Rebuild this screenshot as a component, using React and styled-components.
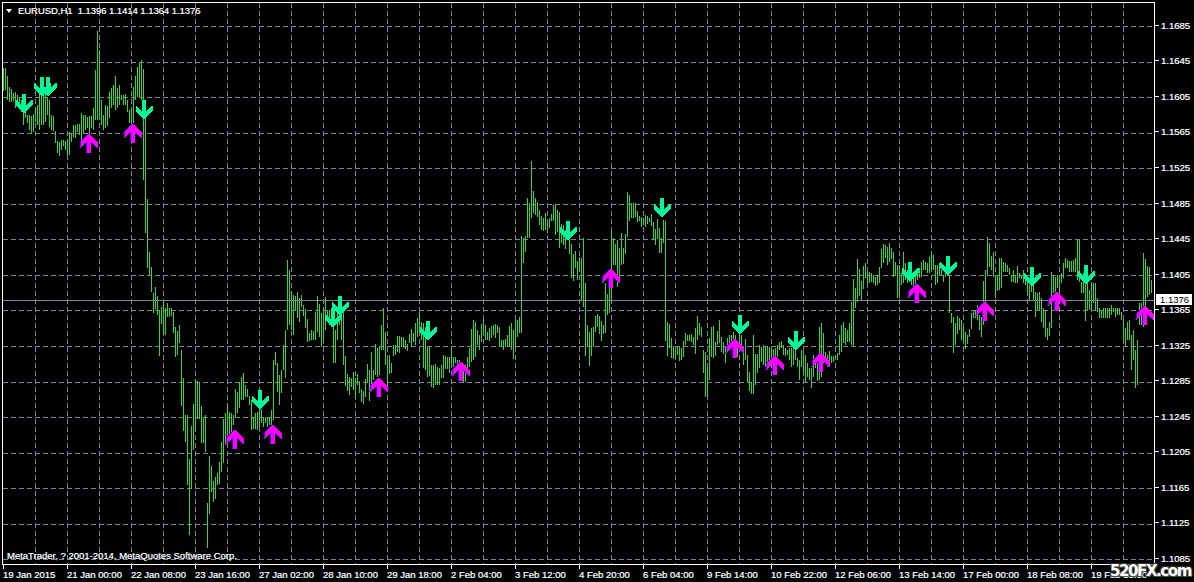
import React from 'react';
import styled, { createGlobalStyle } from 'styled-components';

const GRID = '#778899';
const BULL = '#32d732';
const ROW = 35.55;

const prices = [
  '1.1685', '1.1645', '1.1605', '1.1565', '1.1525', '1.1485', '1.1445', '1.1405',
  '1.1365', '1.1325', '1.1285', '1.1245', '1.1205', '1.1165', '1.1125', '1.1085',
];

const times = [
  '19 Jan 2015', '21 Jan 00:00', '22 Jan 08:00', '23 Jan 16:00', '27 Jan 02:00', '28 Jan 10:00',
  '29 Jan 18:00', '2 Feb 04:00', '3 Feb 12:00', '4 Feb 20:00', '6 Feb 04:00', '9 Feb 14:00',
  '10 Feb 22:00', '12 Feb 06:00', '13 Feb 14:00', '17 Feb 00:00', '18 Feb 08:00', '19 Feb 16:00',
];

// bars are hi/lo pairs, one every 2px starting at `from`; y = top + value / scale
const segments = [
  { from: 3, top: 0, scale: 1, data: [
    68,91, 68,90, 76,100, 87,102, 89,102, 93,101, 92,108, 95,105, 97,106, 100,112, 105,125, 112,118,
    115,123, 115,130, 116,133, 114,132, 108,122, 105,125, 90,130, 85,125, 95,125, 90,122, 97,115,
    100,127, 115,130, 116,131, 131,143, 141,153, 142,156, 140,150, 140,146, 141,150, 140,155, 132,155,
    133,142, 125,137, 125,138, 124,132, 124,135, 113,140, 115,134, 115,130, 117,128, 116,135, 116,128,
    108,130, 70,120, 31,120, 50,120, 100,125, 115,130, 105,128, 106,126, 92,118, 88,108, 85,105, 76,110,
    88,108, 85,105, 95,100, 95,105, 94,105,
    100,112, 110,123, 108,123, 87,123, 76,100, 67,97, 63,97, 60,100, 69,180, 100,233, 199,268, 252,275,
    267,292, 293,313, 287,309, 296,315, 310,356, 307,324, 302,334, 308,335, 303,317, 308,317, 308,316,
    312,333, 327,357, 331,355, 325,343,
    350,406, 378,431, 415,442, 415,485, 459,535, 426,489, 404,450, 379,431, 381,419, 383,419, 406,443,
    417,443, 415,452, 503,548, 456,514, 466,492, 481,502, 477,499, 473,485, 462,484, 442,472, 419,463,
    413,445, 404,440, 412,437, 413,437, 415,425, 389,417, 392,413, 382,408, 377,400, 373,400, 385,397,
    389,397, 396,405, 400,430, 417,429, 413,429, 412,430, 409,427, 409,423, 417,427, 417,423, 417,427,
    417,425, 410,425, 360,420, 352,365, 363,392, 375,405, 370,393, 345,370, 330,378, 260,330, 270,325,
    292,330, 295,335, 296,310, 292,318, 298,322,
  ] },
  { from: 301, top: 250, scale: 3, data: [
    135,172, 165,198, 178,233, 207,275, 250,272, 240,270, 243,270, 185,270, 138,245, 162,260, 190,290,
    175,272, 140,240, 180,210, 180,225, 180,230, 210,340, 240,340, 190,270, 180,225, 180,270, 185,345,
    318,408, 372,422, 380,435, 385,410, 365,420, 385,445, 372,405, 392,430, 418,455, 422,462, 388,440,
    342,400, 360,452, 305,410, 360,390, 282,375, 295,380, 292,375, 225,300, 175,300, 245,345, 330,420,
    315,372, 340,370, 285,318, 285,315, 258,305, 258,310, 262,290, 262,295, 270,298, 282,302, 252,280,
    237,290, 248,275, 218,285, 205,262, 185,245, 215,270, 220,355, 230,360, 290,380, 290,378, 345,410,
    345,415, 342,405, 350,405, 355,405, 345,385, 315,385, 318,358, 320,358, 322,370, 290,340, 320,350,
    320,340, 330,350, 330,380, 350,375, 345,395, 345,395, 320,375, 295,350, 237,335, 210,330, 215,320,
    240,285, 255,300,
  ] },
  { from: 481, top: 150, scale: 3, data: [
    522,575, 510,555, 525,570, 545,570, 535,572, 528,565, 525,555, 522,565, 525,548, 530,590, 570,590,
    570,600, 568,590, 555,590, 528,590, 518,600, 540,627, 510,590, 510,560, 502,550, 258,550, 265,340,
    258,305, 145,265, 160,265, 33,205, 123,190, 145,195, 155,200, 180,225, 198,240, 205,243, 190,240,
    212,248, 205,235, 192,212, 165,212, 163,255, 180,245, 187,293, 222,280, 225,285, 240,297, 245,270,
    265,312, 282,385, 312,392, 303,355, 332,390, 322,365, 325,450, 265,470, 400,618, 525,590, 545,648,
    535,618, 532,590, 497,545, 492,530, 497,553, 512,572, 525,553, 400,550, 432,495, 408,488, 240,460,
    265,345, 282,345, 270,412, 295,385, 250,345, 295,342, 252,312, 127,260, 135,212, 158,205, 160,205,
    160,200, 183,215, 198,212, 200,230, 203,225, 195,230, 198,222, 205,215, 192,228, 215,268, 237,285,
    208,268, 235,308, 265,308, 210,280, 213,522,
  ] },
  { from: 665, top: 280, scale: 3, data: [
    15,182, 125,228, 132,205, 175,235, 198,237, 210,230, 200,225, 202,243, 205,240, 183,230, 160,195,
    165,182, 165,183, 162,185, 170,195, 145,222, 108,180, 130,165, 140,170, 210,278, 215,350, 265,350,
    175,300, 142,230, 138,233, 185,228, 153,195, 120,190, 170,215, 185,222, 200,248, 175,215, 165,210,
    165,190, 155,180, 165,190, 185,232, 160,185, 165,210, 200,255, 178,240, 225,307, 277,332, 305,342,
    165,342, 223,315, 222,280, 195,265, 200,245, 195,255, 200,262, 198,250, 200,245, 205,265, 208,240,
    205,240, 195,230, 185,210, 182,205, 195,225, 205,228, 210,225, 205,240, 205,262, 205,255, 210,240,
    235,262, 240,300, 210,260, 212,280, 225,305, 248,290, 265,300, 265,323, 225,290, 240,265, 250,303,
    140,300, 128,290, 160,250, 215,250, 225,262, 213,250, 228,250, 228,245, 225,240, 218,240, 165,225,
    135,215, 125,188, 145,195, 150,185, 130,185,
  ] },
  { from: 851, top: 220, scale: 3, data: [
    245,375, 178,378, 205,265, 118,245, 148,228, 183,242, 138,208, 130,175, 155,195, 155,190, 158,185,
    165,190, 170,198, 165,195, 142,190, 88,145, 72,130, 75,115, 82,135, 68,125, 85,118, 95,170, 125,165,
    135,235, 135,235, 160,195, 97,190, 130,180, 150,190, 140,185, 155,195, 160,205, 165,215, 145,180,
    145,175, 125,170, 120,150, 125,150, 130,160, 110,160, 100,150, 105,150, 135,195, 135,190, 130,165,
    150,165, 165,185, 150,170, 130,165, 165,280, 280,310, 290,398, 308,375, 288,342, 295,330, 300,360,
    320,365, 335,388, 345,372, 328,350, 280,328, 272,295, 270,295, 255,300, 285,330, 290,350, 182,315,
    150,300, 52,165, 70,140, 108,150, 97,170, 165,235, 165,212, 115,210, 115,205, 125,155, 128,155,
    135,155, 145,165, 165,185, 150,185, 165,188, 138,190, 160,175, 165,178, 150,190, 170,195, 185,220,
    195,240, 190,215, 195,240, 215,290, 218,270, 215,270, 235,305, 265,325, 270,350, 325,360, 305,348,
    155,325, 165,220, 170,225, 165,205, 165,215,
  ] },
  { from: 1061, top: 240, scale: 3, data: [
    100,128, 70,115, 55,85, 60,85, 62,95, 62,95, 60,95, 55,95, 0,120, 0,125, 125,160, 100,160, 100,243,
    130,210, 150,210, 125,210, 130,190, 130,210, 175,215, 205,235, 212,235, 205,235, 205,235, 205,235,
    205,235, 195,225, 205,215, 205,230, 205,225, 205,225, 215,240, 240,300, 265,320, 245,300, 240,300,
    285,390, 270,360, 330,444, 300,435, 188,255, 190,255, 40,262, 58,210, 78,170, 80,165, 120,160,
  ] },
];

const bars = segments.flatMap(({ from, top, scale, data }) => {
  const out = [];
  for (let i = 0; i < data.length; i += 2) {
    out.push({ x: from + i, hi: top + data[i] / scale, lo: top + data[i + 1] / scale });
  }
  return out;
});

const barPath = bars
  .map((b) => `M${b.x + 0.5} ${Math.round(b.hi)}V${Math.round(b.lo)}`)
  .join('');

// centre x, top y of the 19px arrow
const downArrows = [
  [24, 94], [42, 77], [48, 77], [144, 100], [260, 390], [333, 308], [340, 296], [428, 321],
  [568, 221], [662, 198], [740, 315], [796, 331], [910, 262], [948, 256], [1032, 267], [1086, 265],
];
const upArrows = [
  [89, 134], [133, 124], [235, 430], [273, 425], [379, 378], [461, 362], [611, 269], [735, 339],
  [775, 356], [821, 353], [917, 284], [985, 302], [1057, 292], [1145, 306],
];

const arrowDown = '-2,0 2,0 2,11 8.5,5.5 8.5,11 0,19 -8.5,11 -8.5,5.5 -2,11';
const arrowUp = '-2,19 2,19 2,8 8.5,13.5 8.5,8 0,0 -8.5,8 -8.5,13.5 -2,8';

const GlobalStyle = createGlobalStyle`
  html, body {
    margin: 0;
    background: #000;
    overflow: hidden;
  }
`;

const Terminal = styled.div`
  position: relative;
  width: 1194px;
  height: 582px;
  padding: 2px 0 0 2px;
  box-sizing: border-box;
  background: #000;
  color: #fff;
  font-family: 'Liberation Sans', Arial, sans-serif;
  font-size: 9.5px;
  text-shadow: -0.4px 0 rgba(110, 190, 255, 0.55), 0.4px 0 rgba(255, 190, 110, 0.55);
  overflow: hidden;
`;

const ChartRow = styled.div`
  display: flex;
  height: 563px;
`;

const Plot = styled.div`
  position: relative;
  width: 1151px;
  height: 561px;
  border: 1px solid #fff;
  flex: none;
`;

const PlotSvg = styled.svg`
  display: block;
`;

const Legend = styled.div`
  position: absolute;
  top: 2px;
  left: 3px;
  display: flex;
  align-items: center;
  gap: 5px;
  line-height: 12px;
  letter-spacing: -0.05px;
  white-space: pre;
`;

const Caret = styled.span`
  width: 0;
  height: 0;
  margin-right: 1px;
  border-left: 3.5px solid transparent;
  border-right: 3.5px solid transparent;
  border-top: 4px solid #fff;
`;

const Copyright = styled.div`
  position: absolute;
  left: 4px;
  bottom: 2px;
  line-height: 12px;
  white-space: pre;
`;

const PriceAxis = styled.div`
  position: relative;
  flex: 1;
  padding-top: 5.5px;
`;

const PriceRow = styled.div`
  display: flex;
  align-items: center;
  gap: 2px;
  height: ${ROW}px;

  &::before {
    content: '';
    width: 4px;
    height: 1px;
    background: #fff;
  }
`;

const PriceBadge = styled.div`
  position: absolute;
  top: 292px;
  left: 1px;
  width: 36px;
  height: 11px;
  padding-left: 4px;
  box-sizing: border-box;
  background: #fff;
  color: #000;
  line-height: 11px;
  text-shadow: none;
`;

const TimeAxis = styled.div`
  display: flex;
  padding-left: 1px;
`;

const TimeTick = styled.div`
  position: relative;
  flex: none;
  width: 64px;
  padding-top: 4px;
  line-height: 12px;
  white-space: nowrap;

  &::before {
    content: '';
    position: absolute;
    top: 0;
    left: 0;
    width: 1px;
    height: 4px;
    background: #fff;
  }
`;

const Watermark = styled.div`
  position: absolute;
  right: 3px;
  bottom: 3px;
  font-family: 'DejaVu Sans', sans-serif;
  font-size: 15px;
  font-weight: 700;
  line-height: 15px;
  letter-spacing: -1.4px;
  color: #fff;
  text-shadow: 1px 1px 0 #555, -1px -1px 0 #333, 1px -1px 0 #333, -1px 1px 0 #333;
`;

const Arrow = ({ x, y, points, fill }) => (
  <polygon points={points} fill={fill} transform={`translate(${x} ${y})`} />
);

const Chart = () => {
  const gridX = Array.from({ length: 35 }, (_, i) => 35.5 + i * 32);
  const gridY = prices.map((_, i) => Math.round(26 + i * ROW) + 0.5);
  return (
    <PlotSvg width="1151" height="561" viewBox="3 3 1151 561" shapeRendering="crispEdges">
      <g stroke={GRID} strokeDasharray="5 3" fill="none">
        {gridX.map((x) => (
          <line key={x} x1={x} x2={x} y1="3" y2="564" />
        ))}
        {gridY.map((y) => (
          <line key={y} x1="3" x2="1154" y1={y} y2={y} />
        ))}
      </g>
      <path d={barPath} stroke={BULL} fill="none" />
      <line x1="3" x2="1154" y1="300.5" y2="300.5" stroke={GRID} />
      {downArrows.map(([x, y]) => (
        <Arrow key={x} x={x} y={y} points={arrowDown} fill="#00fa9a" />
      ))}
      {upArrows.map(([x, y]) => (
        <g key={x}>
          <Arrow x={x - 1} y={y} points={arrowUp} fill="#2a18e0" />
          <Arrow x={x} y={y} points={arrowUp} fill="#ff00ff" />
        </g>
      ))}
    </PlotSvg>
  );
};

export default function App() {
  return (
    <Terminal>
      <GlobalStyle />
      <ChartRow>
        <Plot>
          <Chart />
          <Legend>
            <Caret />
            {'EURUSD,H1  1.1396 1.1414 1.1364 1.1376'}
          </Legend>
          <Copyright>MetaTrader, ? 2001-2014, MetaQuotes Software Corp.</Copyright>
        </Plot>
        <PriceAxis>
          {prices.map((p) => (
            <PriceRow key={p}>{p}</PriceRow>
          ))}
          <PriceBadge>1.1376</PriceBadge>
        </PriceAxis>
      </ChartRow>
      <TimeAxis>
        {times.map((t) => (
          <TimeTick key={t}>{t}</TimeTick>
        ))}
      </TimeAxis>
      <Watermark>520FX.com</Watermark>
    </Terminal>
  );
}
